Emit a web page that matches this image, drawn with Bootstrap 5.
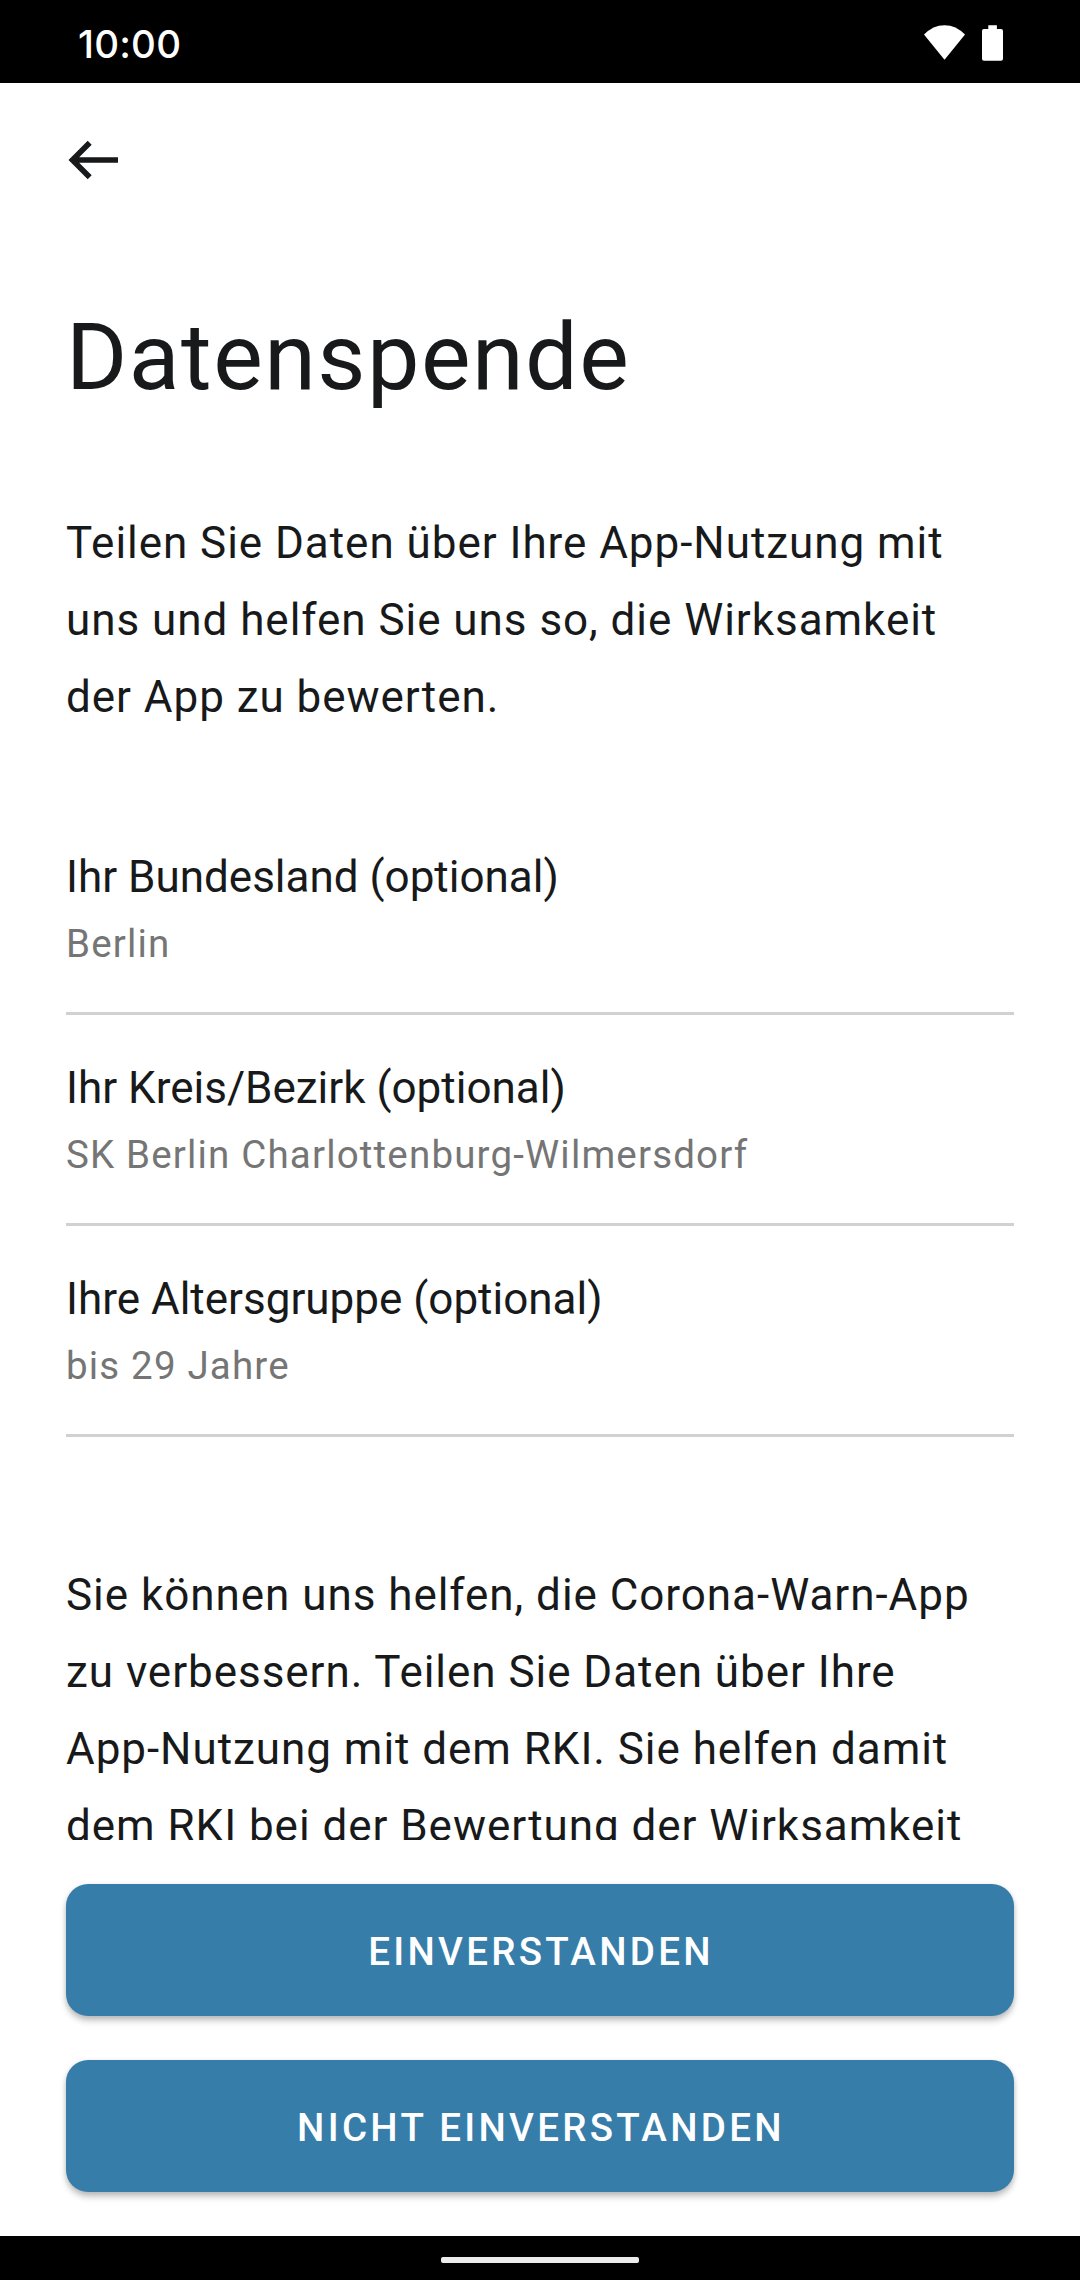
<!DOCTYPE html>
<html lang="de">
<head>
<meta charset="utf-8">
<meta name="viewport" content="width=device-width, initial-scale=1">
<title>Datenspende</title>
<link rel="stylesheet" href="https://cdn.jsdelivr.net/npm/bootstrap@5.3.0/dist/css/bootstrap.min.css">
<style>
html,body{height:100%}
body{font-family:Roboto,sans-serif;color:#17191a;background:#fff;overflow:hidden}
.screen{height:2280px;width:1080px}
.status-bar{height:83px;padding:7px 76px 0 78px}
.clock{font:500 38.5px/75px Inter,sans-serif;letter-spacing:.2px}
.toolbar{height:154px;padding-left:66px}
.back{line-height:0}
.content{padding:0 66px;min-height:0}
.page-title{font-size:93.5px;line-height:110px;letter-spacing:1.45px;font-weight:400;margin:65px 0 0}
.copy{font-size:44px;line-height:77px;letter-spacing:.96px;margin:0}
.intro{margin-top:93px}
.fields{margin-top:68px}
.field{height:211px;border-bottom:3px solid #d1d1d1;padding-top:44px}
.field-name{font-size:44px;line-height:58px}
.field-value{font-size:38.5px;line-height:52px;letter-spacing:1.17px;color:#757575;margin-top:12px}
.details{margin-top:120px;white-space:nowrap}
.actions{padding:44px 66px;gap:44px}
.btn-action{--bs-btn-color:#fff;--bs-btn-bg:#367da9;--bs-btn-border-color:#367da9;height:132px;border:0;border-radius:22px;padding:9px 10px 6px 12px;font-size:38.5px;font-weight:500;letter-spacing:3.3px;box-shadow:0 5px 6px rgba(0,0,0,.22),0 1px 5px rgba(0,0,0,.1)}
.nav-strip{height:44px;padding-top:4px}
.handle{width:198px;height:6px;border-radius:2px;background:#ececec}
</style>
<script src="https://cdn.jsdelivr.net/npm/bootstrap@5.3.0/dist/js/bootstrap.bundle.min.js"></script>
</head>
<body>
<div class="screen d-flex flex-column">
  <div class="status-bar bg-black text-white d-flex justify-content-between flex-shrink-0">
    <span class="clock">10:00</span>
    <svg width="80" height="38" viewBox="924 24 80 38" style="margin-top:17px" fill="#fff" aria-hidden="true">
      <path d="M924 34.6Q933 25.2 944.5 25.2T965 34.6L944.5 59.8Z"/>
      <path d="M988.3 25.2h8.6V29h4.1a2 2 0 0 1 2 2v27.700a2 2 0 0 1-2 2h-17a2 2 0 0 1-2-2V31a2 2 0 0 1 2-2h4.300z"/>
    </svg>
  </div>
  <header class="toolbar d-flex align-items-center flex-shrink-0">
    <a href="#" class="back" aria-label="Zurück">
      <svg width="54" height="44" viewBox="66 138 54 44" fill="#17191a"><path d="M118 157.200H79.200L91.700 144.700 87.700 140.800 68.500 160 87.700 179.200 91.700 175.300 79.200 162.800H118z"/></svg>
    </a>
  </header>
  <main class="content flex-grow-1 overflow-hidden">
    <h1 class="page-title">Datenspende</h1>
    <p class="copy intro">Teilen Sie Daten über Ihre App-Nutzung mit<br>uns und helfen Sie uns so, die Wirksamkeit<br>der App zu bewerten.</p>
    <div class="fields">
      <div class="field"><div class="field-name">Ihr Bundesland (optional)</div><div class="field-value">Berlin</div></div>
      <div class="field"><div class="field-name">Ihr Kreis/Bezirk (optional)</div><div class="field-value">SK Berlin Charlottenburg-Wilmersdorf</div></div>
      <div class="field"><div class="field-name">Ihre Altersgruppe (optional)</div><div class="field-value">bis 29 Jahre</div></div>
    </div>
    <p class="copy details">Sie können uns helfen, die Corona-Warn-App<br>zu verbessern. Teilen Sie Daten über Ihre<br>App-Nutzung mit dem RKI. Sie helfen damit<br>dem RKI bei der Bewertung der Wirksamkeit</p>
  </main>
  <div class="actions d-flex flex-column flex-shrink-0">
    <button type="button" class="btn btn-action w-100 text-uppercase">Einverstanden</button>
    <button type="button" class="btn btn-action w-100 text-uppercase">Nicht einverstanden</button>
  </div>
  <div class="nav-strip bg-black d-flex align-items-center justify-content-center flex-shrink-0"><div class="handle"></div></div>
</div>
</body>
</html>
